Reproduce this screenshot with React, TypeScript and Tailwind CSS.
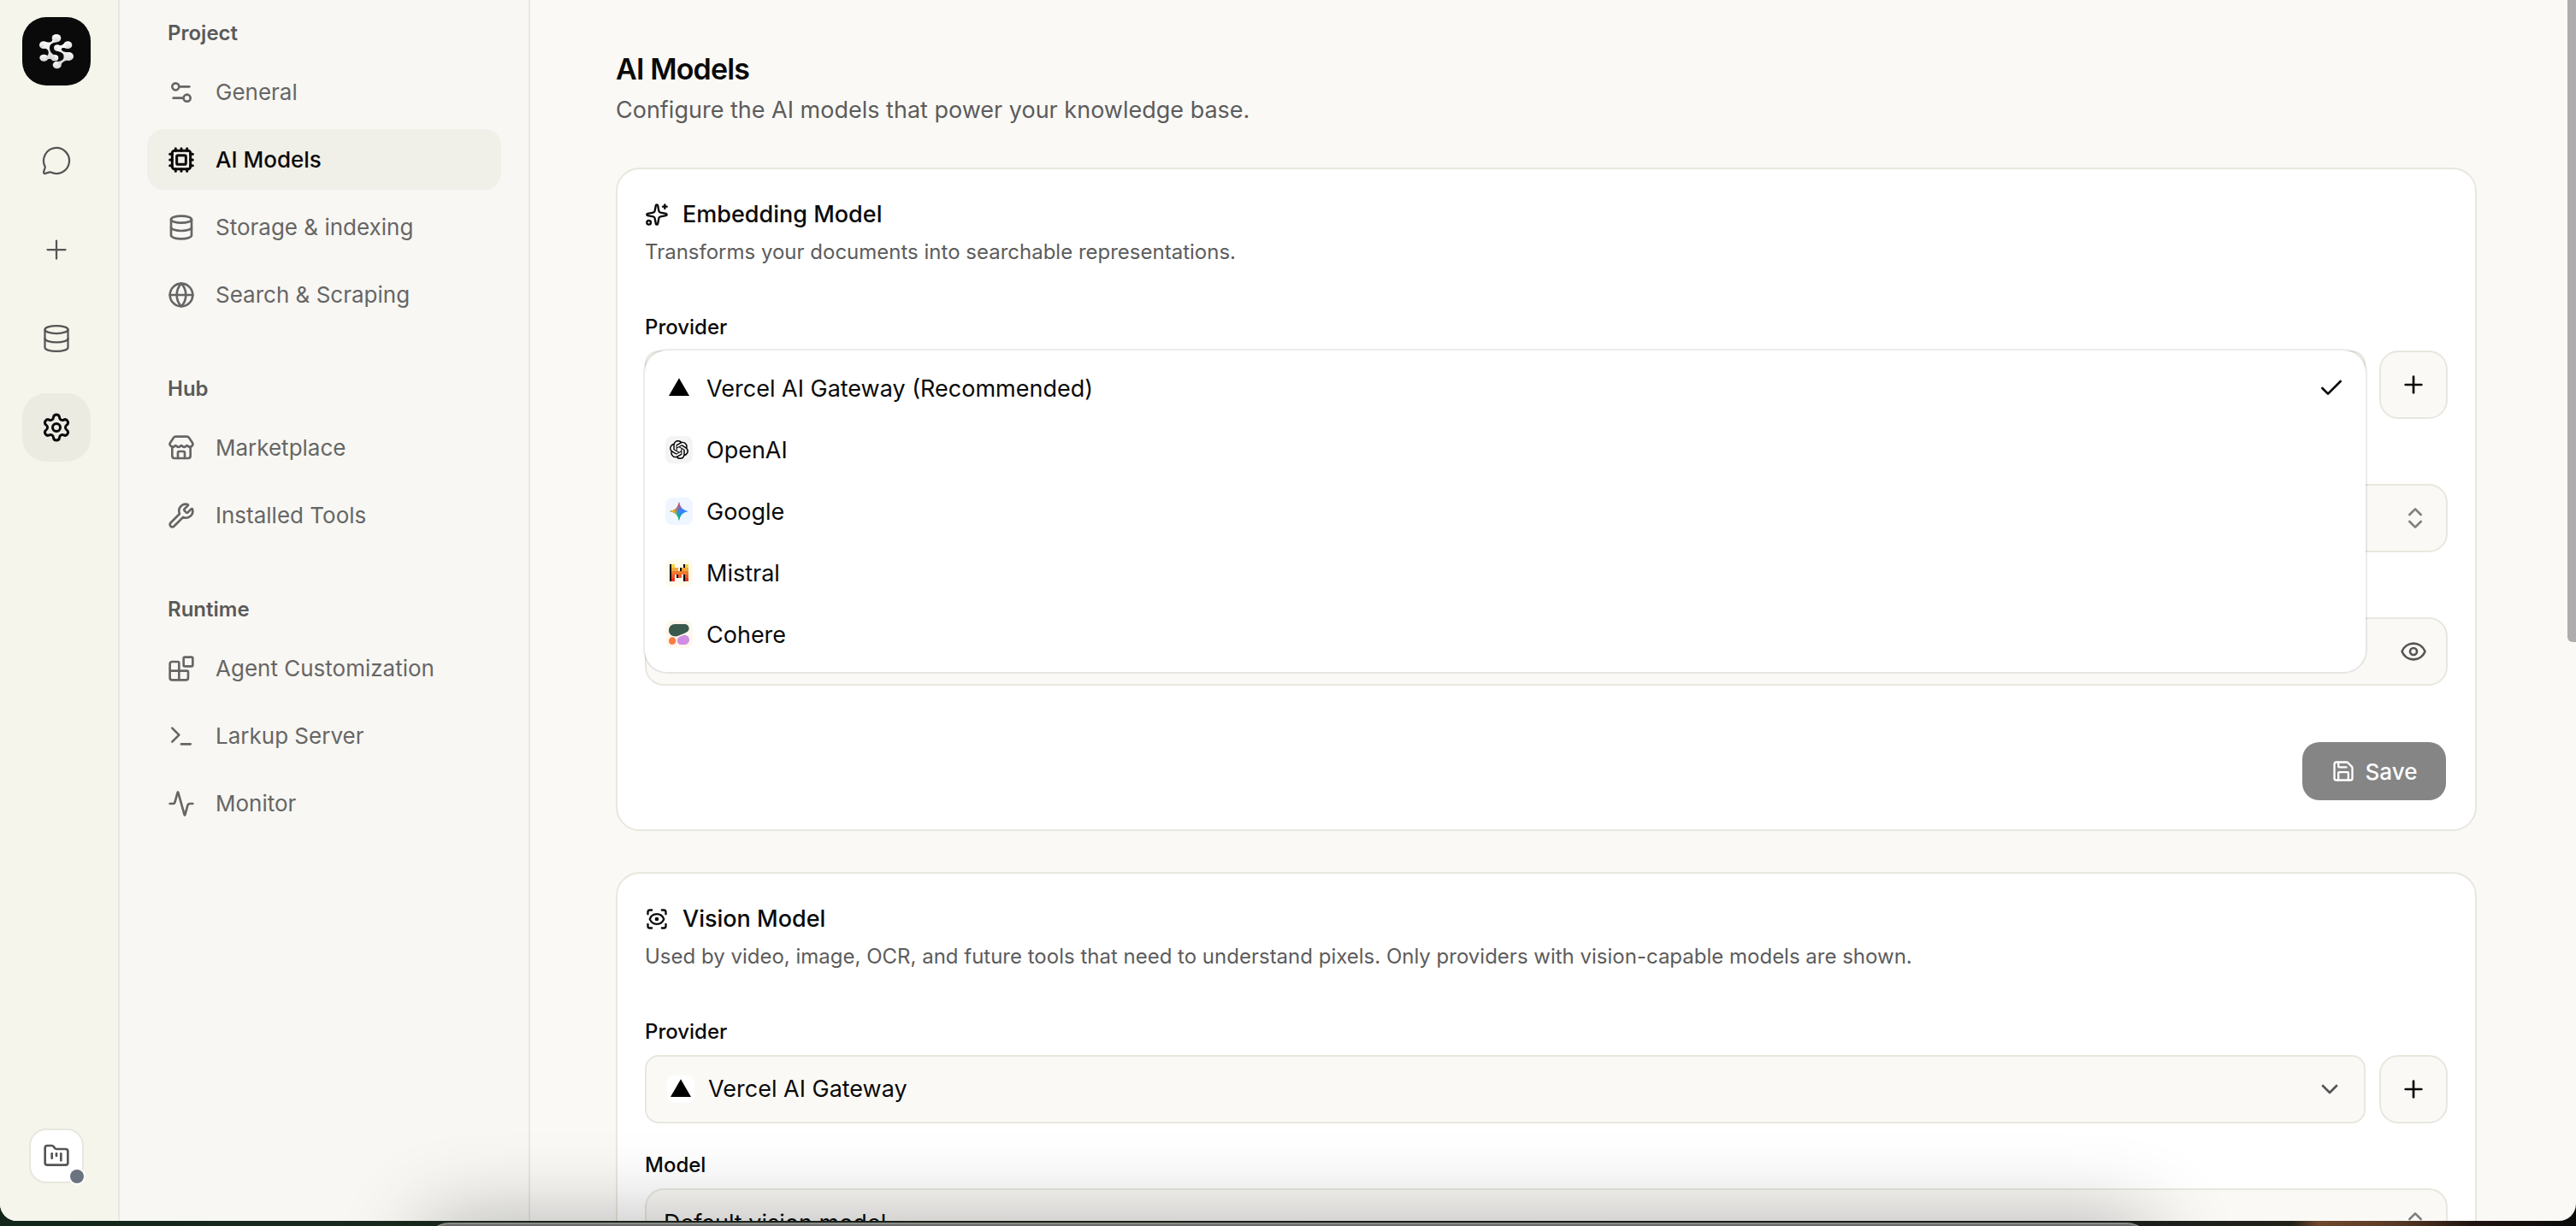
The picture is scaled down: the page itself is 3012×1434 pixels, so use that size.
import type { ReactNode } from "react";
import {
  Activity,
  Blocks,
  Check,
  ChevronDown,
  ChevronsUpDown,
  Cpu,
  Database,
  Eye,
  FolderKanban,
  Globe,
  MessageCircle,
  Plus,
  Save,
  ScanEye,
  Settings,
  Settings2,
  Sparkles,
  Store,
  Terminal,
  Wrench,
  type LucideIcon,
} from "lucide-react";

/* ---------- logos ---------- */

function LarkupLogo() {
  return (
    <svg viewBox="0 0 240 240" className="size-20" aria-hidden="true">
      <defs>
        <linearGradient id="larkup" x1="0" y1="0" x2="0" y2="1">
          <stop offset="0" stopColor="#ffffff" />
          <stop offset="1" stopColor="#d4d4d4" />
        </linearGradient>
      </defs>
      <g fill="url(#larkup)">
        <ellipse cx="120" cy="74" rx="16" ry="14" />
        <ellipse cx="75" cy="98" rx="15" ry="13" />
        <ellipse cx="76" cy="143" rx="15" ry="12" />
        <ellipse cx="114" cy="143" rx="13" ry="11" />
        <path d="M106 80C104 88 96 89 84 88L70 110C86 108 94 116 92 128C90 136 86 136 84 136L84 150C92 146 102 146 110 152L116 134C104 130 97 122 96 110C95 97 106 88 122 88Z" />
        <ellipse cx="160" cy="98" rx="15" ry="13" />
        <ellipse cx="123" cy="108" rx="12" ry="11" />
        <ellipse cx="163" cy="138" rx="17" ry="15" />
        <ellipse cx="122" cy="168" rx="15" ry="13" />
        <path d="M126 98C134 102 142 98 150 90L156 110C146 106 138 108 137 112C138 120 146 124 166 123L166 152C152 150 140 156 134 172L118 156C136 156 147 150 146 137C145 124 130 122 120 118Z" />
      </g>
    </svg>
  );
}

function VercelMark() {
  return (
    <svg viewBox="0 0 24 24" className="size-6 text-black" fill="currentColor" aria-hidden="true">
      <path d="M12 .3 24 21.1H0Z" />
    </svg>
  );
}

function OpenAIMark() {
  return (
    <svg viewBox="0 0 24 24" className="size-[22px] text-black" fill="currentColor" aria-hidden="true">
      <path d="M22.2819 9.8211a5.9847 5.9847 0 0 0-.5157-4.9108 6.0462 6.0462 0 0 0-6.5098-2.9A6.0651 6.0651 0 0 0 4.9807 4.1818a5.9847 5.9847 0 0 0-3.9977 2.9 6.0462 6.0462 0 0 0 .7427 7.0966 5.98 5.98 0 0 0 .511 4.9107 6.051 6.051 0 0 0 6.5146 2.9001A5.9847 5.9847 0 0 0 13.2599 24a6.0557 6.0557 0 0 0 5.7718-4.2058 5.9894 5.9894 0 0 0 3.9977-2.9001 6.0557 6.0557 0 0 0-.7475-7.0729zm-9.022 12.6081a4.4755 4.4755 0 0 1-2.8764-1.0408l.1419-.0804 4.7783-2.7582a.7948.7948 0 0 0 .3927-.6813v-6.7369l2.02 1.1686a.071.071 0 0 1 .038.052v5.5826a4.504 4.504 0 0 1-4.4945 4.4944zm-9.6607-4.1254a4.4708 4.4708 0 0 1-.5346-3.0137l.142.0852 4.783 2.7582a.7712.7712 0 0 0 .7806 0l5.8428-3.3685v2.3324a.0804.0804 0 0 1-.0332.0615L9.74 19.9502a4.4992 4.4992 0 0 1-6.1408-1.6464zM2.3408 7.8956a4.485 4.485 0 0 1 2.3655-1.9728V11.6a.7664.7664 0 0 0 .3879.6765l5.8144 3.3543-2.0201 1.1685a.0757.0757 0 0 1-.071 0l-4.8303-2.7865A4.504 4.504 0 0 1 2.3408 7.872zm16.5963 3.8558L13.1038 8.364 15.1192 7.2a.0757.0757 0 0 1 .071 0l4.8303 2.7913a4.4944 4.4944 0 0 1-.6765 8.1042v-5.6772a.79.79 0 0 0-.407-.667zm2.0107-3.0231l-.142-.0852-4.7735-2.7818a.7759.7759 0 0 0-.7854 0L9.409 9.2297V6.8974a.0662.0662 0 0 1 .0284-.0615l4.8303-2.7866a4.4992 4.4992 0 0 1 6.6802 4.66zM8.3065 12.863l-2.02-1.1638a.0804.0804 0 0 1-.038-.0567V6.0742a4.4992 4.4992 0 0 1 7.3757-3.4537l-.142.0805L8.704 5.459a.7948.7948 0 0 0-.3927.6813zm1.0976-2.3654l2.602-1.4998 2.6069 1.4998v2.9994l-2.5974 1.4997-2.6067-1.4997Z" />
    </svg>
  );
}

function GeminiMark() {
  const star =
    "M12 0C12.6 3.2 13.6 5.9 15.8 8.2C18.1 10.4 20.8 11.4 24 12C20.8 12.6 18.1 13.6 15.8 15.8C13.6 18.1 12.6 20.8 12 24C11.4 20.8 10.4 18.1 8.2 15.8C5.9 13.6 3.2 12.6 0 12C3.2 11.4 5.9 10.4 8.2 8.2C10.4 5.9 11.4 3.2 12 0Z";
  return (
    <svg viewBox="0 0 24 24" className="size-[22px]" aria-hidden="true">
      <defs>
        <linearGradient id="gem-green" x1="9" y1="20" x2="13" y2="12" gradientUnits="userSpaceOnUse">
          <stop stopColor="#08b962" />
          <stop offset="1" stopColor="#08b962" stopOpacity="0" />
        </linearGradient>
        <linearGradient id="gem-red" x1="9" y1="4" x2="14" y2="11" gradientUnits="userSpaceOnUse">
          <stop stopColor="#f94543" />
          <stop offset="1" stopColor="#f94543" stopOpacity="0" />
        </linearGradient>
        <linearGradient id="gem-yellow" x1="4" y1="12" x2="11" y2="12" gradientUnits="userSpaceOnUse">
          <stop stopColor="#fabc12" />
          <stop offset="1" stopColor="#fabc12" stopOpacity="0" />
        </linearGradient>
      </defs>
      <path d={star} fill="#3186ff" />
      <path d={star} fill="url(#gem-green)" />
      <path d={star} fill="url(#gem-red)" />
      <path d={star} fill="url(#gem-yellow)" />
    </svg>
  );
}

function MistralMark() {
  return (
    <svg viewBox="0 0 256 233" className="h-5 w-[22px]" shapeRendering="crispEdges" aria-hidden="true">
      <path d="M186.2 0h46.5v46.5h-46.5zM0 0h46.5v233H0zM139.6 46.5h46.5v46.6h-46.5zM93.1 139.6h46.5v46.6H93.1zM186.2 139.6h46.5V233h-46.5z" fill="#000" />
      <path d="M209.5 0H256v46.5h-46.5zM23.3 0h46.5v46.5H23.3z" fill="#f7d046" />
      <path d="M162.9 46.5H256v46.6h-93.1zM23.3 46.5h93.1v46.6H23.3z" fill="#f2a73b" />
      <path d="M23.3 93.1H256v46.5H23.3z" fill="#ee792f" />
      <path d="M116.4 139.6h46.5v46.6h-46.5zM209.5 139.6H256v46.6h-46.5zM23.3 139.6h46.5v46.6H23.3z" fill="#eb5829" />
      <path d="M209.5 186.2H256V233h-46.5zM23.3 186.2h46.5V233H23.3z" fill="#ea3326" />
    </svg>
  );
}

function CohereMark() {
  return (
    <svg viewBox="0 0 75 75" className="size-6" aria-hidden="true">
      <path fill="#39594d" d="M24.3 44.7c2 0 6-.1 11.6-2.4 6.5-2.7 19.3-7.5 28.6-12.5 6.5-3.5 9.3-8.1 9.3-14.3C73.8 7 66.9 0 58.3 0h-36C10 0 0 10 0 22.3s9.4 22.4 24.3 22.4z" />
      <path fill="#d18ee2" d="M30.4 60c0-6 3.6-11.5 9.2-13.8l11.3-4.7C62.4 36.8 75 45.2 75 57.6 75 67.2 67.2 75 57.6 75H45.3c-8.2 0-14.9-6.7-14.9-15z" />
      <path fill="#f97b40" d="M12.9 47.6C5.8 47.6 0 53.4 0 60.5v1.7C0 69.2 5.8 75 12.9 75s12.9-5.8 12.9-12.9v-1.7c-.1-7-5.8-12.8-12.9-12.8z" />
    </svg>
  );
}

/* ---------- navigation ---------- */

const railItems: { label: string; icon: LucideIcon; active?: boolean }[] = [
  { label: "Chat", icon: MessageCircle },
  { label: "New", icon: Plus },
  { label: "Data", icon: Database },
  { label: "Settings", icon: Settings, active: true },
];

function Rail() {
  return (
    <nav aria-label="Main" className="flex w-[140px] shrink-0 flex-col justify-between border-r-2 border-[#e8e8e0] bg-[#f5f5ec] pt-5 pb-11 pl-[26px]">
      <div>
        <a href="#home" aria-label="Home" className="block size-20 overflow-hidden rounded-[28px] bg-[#0a0a0a]">
          <LarkupLogo />
        </a>
        <ul className="mt-12 flex flex-col gap-6">
          {railItems.map(({ label, icon: Icon, active }) => (
            <li key={label}>
              <a
                href={`#${label.toLowerCase()}`}
                aria-label={label}
                className={
                  active
                    ? "flex size-20 items-center justify-center rounded-[28px] bg-[#ebebe2] text-[#0a0a0a]"
                    : "flex size-20 items-center justify-center rounded-[28px] text-[#555555]"
                }
              >
                <Icon className="size-9" strokeWidth={active ? 2 : 1.5} />
              </a>
            </li>
          ))}
        </ul>
      </div>
      <button type="button" aria-label="Projects" className="relative ml-2 flex size-16 items-center justify-center rounded-[20px] border-2 border-[#e8e7de] bg-white text-[#555555]">
        <FolderKanban className="size-8" strokeWidth={2} />
        <span className="absolute -right-0.5 -bottom-0.5 size-4 rounded-full bg-[#6b7280] ring-2 ring-white" />
      </button>
    </nav>
  );
}

const groups: { title: string; items: { label: string; icon: LucideIcon; active?: boolean }[] }[] = [
  {
    title: "Project",
    items: [
      { label: "General", icon: Settings2 },
      { label: "AI Models", icon: Cpu, active: true },
      { label: "Storage & indexing", icon: Database },
      { label: "Search & Scraping", icon: Globe },
    ],
  },
  {
    title: "Hub",
    items: [
      { label: "Marketplace", icon: Store },
      { label: "Installed Tools", icon: Wrench },
    ],
  },
  {
    title: "Runtime",
    items: [
      { label: "Agent Customization", icon: Blocks },
      { label: "Larkup Server", icon: Terminal },
      { label: "Monitor", icon: Activity },
    ],
  },
];

function SideNav() {
  return (
    <nav aria-label="Settings" className="flex w-[480px] shrink-0 flex-col gap-[59px] border-r-2 border-[#e8e7de] bg-[#f8f7f3] px-8 pt-[23px]">
      {groups.map((group) => (
        <section key={group.title}>
          <h2 className="pl-6 text-2xl/8 font-semibold text-[#5a5a5a]">{group.title}</h2>
          <ul className="mt-[17px] flex flex-col gap-2">
            {group.items.map(({ label, icon: Icon, active }) => (
              <li key={label}>
                <a
                  href={`#${label}`}
                  aria-current={active ? "page" : undefined}
                  className={
                    active
                      ? "flex h-[71px] items-center gap-6 rounded-[20px] bg-[#f0efe8] px-6 text-[26px] font-medium text-[#0a0a0a]"
                      : "flex h-[71px] items-center gap-6 rounded-[20px] px-6 text-[26px] text-[#666666]"
                  }
                >
                  <Icon className="size-8 shrink-0" strokeWidth={active ? 2.25 : 2} />
                  {label}
                </a>
              </li>
            ))}
          </ul>
        </section>
      ))}
    </nav>
  );
}

/* ---------- form pieces ---------- */

function Card({ icon: Icon, title, description, children }: { icon: LucideIcon; title: string; description: string; children: ReactNode }) {
  return (
    <section className="rounded-[28px] border-2 border-[#e8e7de] bg-white px-8 pt-[33px] pb-8">
      <h2 className="flex items-center gap-4 text-[27px]/10 font-medium">
        <Icon className="size-7" />
        {title}
      </h2>
      <p className="mt-2 text-2xl/8 text-[#5c5c5c]">{description}</p>
      <div className="mt-14 flex flex-col gap-[33px]">{children}</div>
    </section>
  );
}

function Field({ id, label, children }: { id: string; label: string; children: ReactNode }) {
  return (
    <div className="flex flex-col gap-[11px]">
      <label htmlFor={id} className="text-2xl/8 font-medium">
        {label}
      </label>
      {children}
    </div>
  );
}

function ProviderField({ id, value, children }: { id: string; value: string; children?: ReactNode }) {
  return (
    <Field id={id} label="Provider">
      <div className="flex gap-4">
        <div className="relative flex-1">
          <select id={id} className="h-20 w-full appearance-none rounded-2xl border-2 border-[#e8e7de] bg-[#faf9f6] pr-20 pl-18 text-[27px] text-[#0a0a0a]">
            <option>{value}</option>
          </select>
          <span className="pointer-events-none absolute inset-y-0 left-[26px] my-auto flex size-8 items-center justify-center rounded-lg bg-white">
            <VercelMark />
          </span>
          <ChevronDown className="pointer-events-none absolute inset-y-0 right-[26px] my-auto size-8 text-[#555555]" />
          {children}
        </div>
        <button type="button" aria-label="Add provider" className="flex size-20 shrink-0 items-center justify-center rounded-[22px] border-2 border-[#e8e7de] bg-[#faf9f6]">
          <Plus className="size-8" />
        </button>
      </div>
    </Field>
  );
}

function ModelField({ id, value }: { id: string; value: string }) {
  return (
    <Field id={id} label="Model">
      <div className="relative">
        <input id={id} type="text" defaultValue={value} className="h-20 w-full rounded-[22px] border-2 border-[#e8e7de] bg-[#faf9f6] pr-20 pl-5 text-[27px]" />
        <ChevronsUpDown className="pointer-events-none absolute inset-y-0 right-[22px] my-auto size-8 text-[#808080]" />
      </div>
    </Field>
  );
}

const providers: { name: string; tile: string; mark: ReactNode; selected?: boolean }[] = [
  { name: "Vercel AI Gateway (Recommended)", tile: "bg-white", mark: <VercelMark />, selected: true },
  { name: "OpenAI", tile: "bg-[#f4f4f4]", mark: <OpenAIMark /> },
  { name: "Google", tile: "bg-[#eff6ff]", mark: <GeminiMark /> },
  { name: "Mistral", tile: "bg-[#fffbeb]", mark: <MistralMark /> },
  { name: "Cohere", tile: "bg-[#fff7ed]", mark: <CohereMark /> },
];

function ProviderMenu() {
  return (
    <div role="listbox" aria-label="Provider" className="absolute inset-x-0 top-0 z-10 rounded-[26px] bg-white p-2 ring-2 ring-black/8">
      {providers.map(({ name, tile, mark, selected }) => (
        <button key={name} type="button" role="option" aria-selected={!!selected} className="flex h-18 w-full items-center gap-4 px-4 text-left text-[27px] text-[#0a0a0a]">
          <span className={`flex size-8 items-center justify-center rounded-lg ${tile}`}>{mark}</span>
          <span className="flex-1 pt-0.5">{name}</span>
          {selected && <Check className="size-8" />}
        </button>
      ))}
    </div>
  );
}

/* ---------- page ---------- */

export default function App() {
  return (
    <div className="relative flex h-screen flex-col overflow-hidden bg-[linear-gradient(90deg,#12261a_0%,#1d2a1e_20%,#1b2019_60%,#1e211d_85%,#23211a_89%,#70482c_90%,#5a3a26_93%,#1f1410_96%,#0a0a0a_100%)] pb-1.5 font-[Inter,sans-serif] text-[#0a0a0a]">
      <div className="flex min-h-0 flex-1 overflow-hidden rounded-b-[20px] bg-[#faf9f6]">
        <Rail />
        <SideNav />
        <main className="relative min-w-0 flex-1 overflow-hidden pt-[61px] pr-[116px] pl-[100px]">
          <h1 className="text-[34px]/10 font-semibold tracking-tight">AI Models</h1>
          <p className="mt-2 text-[27px]/10 text-[#5c5c5c]">Configure the AI models that power your knowledge base.</p>

          <div className="mt-[47px] flex flex-col gap-12">
            <Card icon={Sparkles} title="Embedding Model" description="Transforms your documents into searchable representations.">
              <ProviderField id="embedding-provider" value="Vercel AI Gateway">
                <ProviderMenu />
              </ProviderField>
              <ModelField id="embedding-model" value="" />
              <Field id="embedding-key" label="API key">
                <div className="relative">
                  <input id="embedding-key" type="password" className="h-20 w-full rounded-[22px] border-2 border-[#e8e7de] bg-[#faf9f6] pr-20 pl-5 text-[27px]" />
                  <button type="button" aria-label="Show API key" className="absolute inset-y-0 right-6 my-auto flex size-8 items-center justify-center text-[#555555]">
                    <Eye className="size-8" />
                  </button>
                </div>
              </Field>
              <div className="mt-[31px] flex justify-end p-0.5">
                <button type="button" disabled className="flex h-[68px] w-[168px] items-center justify-center gap-3 rounded-[20px] bg-[#858585] text-[26px] font-medium text-white">
                  <Save className="size-7" />
                  Save
                </button>
              </div>
            </Card>

            <Card
              icon={ScanEye}
              title="Vision Model"
              description="Used by video, image, OCR, and future tools that need to understand pixels. Only providers with vision-capable models are shown."
            >
              <ProviderField id="vision-provider" value="Vercel AI Gateway" />
              <ModelField id="vision-model" value="Default vision model" />
            </Card>
          </div>

          <div className="absolute top-0 right-0 h-[751px] w-2.5 rounded-bl-md bg-[#adadad]" />
        </main>
      </div>

      {/* top edge of the window that sits in front, with its shadow */}
      <div className="pointer-events-none absolute inset-x-[16.5%] -bottom-[196px] h-[200px] rounded-[28px] border-t-2 border-[#8a8c88] bg-[#6b6b69] shadow-[0_0_100px_rgba(0,0,0,0.3)]" />
    </div>
  );
}
